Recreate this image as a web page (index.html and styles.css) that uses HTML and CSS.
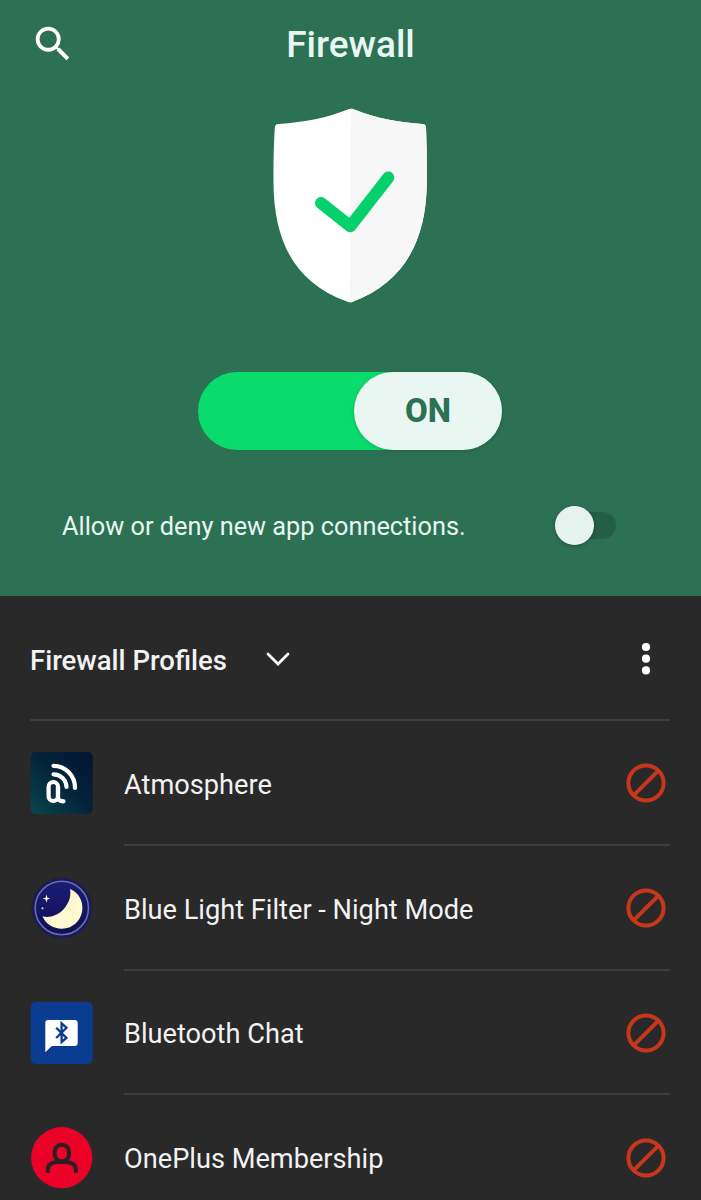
FILE: index.html
```html
<!DOCTYPE html>
<html lang="en">

<head>
    <meta charset="UTF-8">
    <meta name="viewport" content="width=device-width, initial-scale=1.0">
    <title>Firewall</title>
    <link rel="stylesheet" href="styles.css">
</head>

<body>

    <header class="hero">
        <div class="topbar">
            <svg class="search-icon" viewBox="0 0 24 24">
                <path d="M15.5 14h-.79l-.28-.27A6.471 6.471 0 0 0 16 9.5 6.5 6.5 0 1 0 9.5 16c1.61 0 3.09-.59 4.23-1.57l.27.28v.79l5 4.99L20.49 19l-4.99-5zm-6 0C7.01 14 5 11.99 5 9.5S7.01 5 9.5 5 14 7.01 14 9.5 11.99 14 9.5 14z"/>
            </svg>
            <h1>Firewall</h1>
        </div>

        <svg class="shield" viewBox="0 0 160 200">
            <path fill="#fff" d="M81 3.8Q79 3.8 76.5 5C56 13 36 17 8.5 19Q5 19.4 4.8 22.5C3.8 40 3.3 57 3.5 78C4 137 25 178 77.5 196.7Q80 197.7 82.5 196.7C133 178 156.3 137 156.8 78C157 57 156.7 40 156 22.5Q155.8 19.4 152.500 19C128 17.300 107 13.500 85.500 5Q83 3.800 81 3.800Z"/>
            <path fill="#f7f7f7" d="M81 3.8Q83 3.8 85.5 5C107 13.5 128 17.3 152.5 19Q155.8 19.4 156 22.5C156.7 40 157 57 156.8 78C156.3 137 133 178 82.5 196.7Q81.2 197.3 80 197.3Z"/>
            <path class="tick" d="M51 98L80.3 121.3L118.3 72.5"/>
        </svg>

        <div class="power">
            <div class="power-thumb">ON</div>
        </div>

        <div class="new-apps">
            <span class="new-apps-label">Allow or deny new app connections.</span>
            <div class="switch">
                <div class="switch-thumb"></div>
            </div>
        </div>
    </header>

    <main class="profiles">
        <div class="profiles-head">
            <h2>Firewall Profiles</h2>
            <svg class="chevron" viewBox="0 0 26 16">
                <path d="M3 3L13 13L23 3"/>
            </svg>
            <svg class="more" viewBox="0 0 10 34">
                <circle cx="5" cy="5" r="4.1"/>
                <circle cx="5" cy="16.7" r="4.1"/>
                <circle cx="5" cy="28.4" r="4.1"/>
            </svg>
        </div>

        <div class="app">
            <svg class="app-icon" viewBox="0 0 64 64">
                <defs>
                    <linearGradient id="atmo" x1="0" y1="1" x2="1" y2="0">
                        <stop offset="0" stop-color="#0a4650"/>
                        <stop offset="0.5" stop-color="#04243a"/>
                        <stop offset="1" stop-color="#021432"/>
                    </linearGradient>
                </defs>
                <rect x="0.7" y="1" width="62" height="62" rx="5" fill="url(#atmo)"/>
                <g fill="none" stroke="#fff" stroke-width="4.2" stroke-linecap="round">
                    <rect x="18.6" y="31" width="9.4" height="19" rx="4.7"/>
                    <path d="M28 36V46Q28 50.3 33.5 50.3"/>
                    <path d="M23.5 23.3A13 13 0 0 1 36.5 36"/>
                    <path d="M23.5 14.8A21.5 22 0 0 1 45 37"/>
                </g>
            </svg>
            <div class="app-row">
                <span>Atmosphere</span>
                <svg class="blocked" viewBox="0 0 40 40"><circle cx="20" cy="20" r="17.6"/><path d="M7.6 32.4L32.4 7.6"/></svg>
            </div>
        </div>

        <div class="app">
            <svg class="app-icon" viewBox="0 0 64 64">
                <defs>
                    <radialGradient id="night">
                        <stop offset="0.88" stop-color="#141466"/>
                        <stop offset="1" stop-color="#141466" stop-opacity="0.2"/>
                    </radialGradient>
                    <linearGradient id="sky" x1="0" y1="0" x2="0" y2="1">
                        <stop offset="0" stop-color="#1a1c78"/>
                        <stop offset="1" stop-color="#101052"/>
                    </linearGradient>
                </defs>
                <circle cx="31.8" cy="32" r="31" fill="url(#night)"/>
                <circle cx="31.8" cy="32" r="26.7" fill="url(#sky)" stroke="#686ea6" stroke-width="1.6"/>
                <path fill="#fff8d0" d="M40 13C48.5 16.5 53.5 25 52.2 35C50.5 45.5 42 52.8 32 52.7C23 52.5 15.5 48 12.5 40.3C19 42 27.5 40 33.3 33.5C38.8 27.5 41.5 20.5 40 13Z"/>
                <path fill="#fff8d0" d="M16.5 18.5L17.4 21.7L20.3 22.6L17.4 23.5L16.5 26.7L15.6 23.5L12.7 22.6L15.6 21.7Z"/>
                <circle cx="12.5" cy="32.3" r="1.1" fill="#d5d2cf"/>
            </svg>
            <div class="app-row">
                <span>Blue Light Filter - Night Mode</span>
                <svg class="blocked" viewBox="0 0 40 40"><circle cx="20" cy="20" r="17.6"/><path d="M7.6 32.4L32.4 7.6"/></svg>
            </div>
        </div>

        <div class="app">
            <svg class="app-icon" viewBox="0 0 64 64">
                <rect x="0.7" y="1" width="62" height="62" rx="5.5" fill="#0a3c92"/>
                <path fill="#fff" d="M18 19H44.7Q47.7 19 47.7 22V42Q47.7 45 44.7 45H21.8L15.3 51.3V21.7Q15.3 19 18 19Z"/>
                <path fill="none" stroke="#0a3c92" stroke-width="2.3" d="M26.2 26.7L36.5 37L31.6 41V22.3L36.5 26.7L26.2 37"/>
            </svg>
            <div class="app-row">
                <span>Bluetooth Chat</span>
                <svg class="blocked" viewBox="0 0 40 40"><circle cx="20" cy="20" r="17.6"/><path d="M7.6 32.4L32.4 7.6"/></svg>
            </div>
        </div>

        <div class="app">
            <svg class="app-icon" viewBox="0 0 64 64">
                <circle cx="31.7" cy="31.7" r="30.6" fill="#eb0028"/>
                <g fill="none" stroke="#2a2022" stroke-width="4">
                    <rect x="24.7" y="18.7" width="14.3" height="16.8" rx="7.1"/>
                    <path d="M17.7 46.7V44.5Q17.7 37.7 24 36.5Q32 34.8 39.7 36.5Q45.9 37.7 45.9 44.5V46.7"/>
                </g>
            </svg>
            <div class="app-row">
                <span>OnePlus Membership</span>
                <svg class="blocked" viewBox="0 0 40 40"><circle cx="20" cy="20" r="17.6"/><path d="M7.6 32.4L32.4 7.6"/></svg>
            </div>
        </div>
    </main>

</body>

</html>
```
FILE: styles.css
```css
* {
    box-sizing: border-box;
}

body {
    margin: 0;
    height: 1200px;
    overflow: hidden;
    background: #292929;
    font-family: Roboto, "Liberation Sans", sans-serif;
    color: #f2f2f2;
}

svg {
    display: block;
    flex-shrink: 0;
}

/* Green header */
.hero {
    height: 596px;
    padding-right: 1px;
    background: #2d7155;
    color: #e8f6f1;
    display: flex;
    flex-direction: column;
    align-items: center;
}

.topbar {
    width: 100%;
    height: 88px;
    padding: 0 30px;
    display: grid;
    grid-template-columns: 46px 1fr 46px;
    align-items: center;
}

.search-icon {
    width: 46px;
    height: 46px;
    fill: #fff;
}

h1 {
    margin: 0;
    padding: 1px 0 0 1px;
    font-size: 37px;
    font-weight: 500;
    line-height: 44px;
    text-align: center;
}

.shield {
    width: 160px;
    height: 200px;
    margin-top: 17px;
}

.tick {
    fill: none;
    stroke: #04d16c;
    stroke-width: 12;
    stroke-linecap: round;
    stroke-linejoin: round;
}

.power {
    width: 304px;
    height: 78px;
    margin-top: 67px;
    border-radius: 39px;
    background: #09dc6d;
    display: flex;
    justify-content: flex-end;
}

.power-thumb {
    width: 148px;
    height: 78px;
    border-radius: 39px;
    background: #e9f6f2;
    box-shadow: 0 1px 4px rgba(0, 0, 0, 0.18);
    color: #2d7155;
    font-size: 33px;
    font-weight: 800;
    line-height: 78px;
    text-align: center;
}

.new-apps {
    width: 100%;
    margin-top: 52px;
    padding: 0 84px 0 62px;
    display: flex;
    justify-content: space-between;
    align-items: center;
    font-size: 25.3px;
    line-height: 40px;
}

.new-apps-label {
    padding-top: 5px;
}

.switch {
    width: 52px;
    height: 27px;
    margin-top: 1px;
    border-radius: 14px;
    background: #255e46;
    display: flex;
    align-items: center;
}

.switch-thumb {
    width: 39px;
    height: 39px;
    flex-shrink: 0;
    margin-left: -9.5px;
    border-radius: 50%;
    background: #e6f2ee;
    box-shadow: 0 1px 4px rgba(0, 0, 0, 0.3);
}

/* App list */
.profiles {
    padding: 0 31px 0 30px;
}

.profiles-head {
    height: 125px;
    padding-top: 2px;
    border-bottom: 2px solid #3d3d3d;
    display: flex;
    align-items: center;
}

h2 {
    margin: 0;
    padding-top: 3px;
    font-size: 27.5px;
    font-weight: 500;
}

.chevron {
    width: 26px;
    height: 16px;
    margin-left: 38px;
    fill: none;
    stroke: #fff;
    stroke-width: 2.7;
    stroke-linecap: round;
}

.more {
    width: 10px;
    height: 34px;
    margin-left: auto;
    margin-right: 19px;
    fill: #fff;
}

.app {
    height: 124.8px;
    display: flex;
    align-items: center;
}

.app-icon {
    width: 64px;
    height: 64px;
}

.app-row {
    flex: 1;
    height: 100%;
    margin-left: 30px;
    padding-top: 2px;
    border-bottom: 2px solid #3d3d3d;
    display: flex;
    align-items: center;
    justify-content: space-between;
    font-size: 27.2px;
}

.app-row span {
    padding-top: 3px;
}

.app:last-child .app-row {
    border-bottom-color: transparent;
}

.blocked {
    width: 40px;
    height: 40px;
    margin-right: 4px;
    fill: none;
    stroke: #c8371b;
    stroke-width: 4;
}
```
